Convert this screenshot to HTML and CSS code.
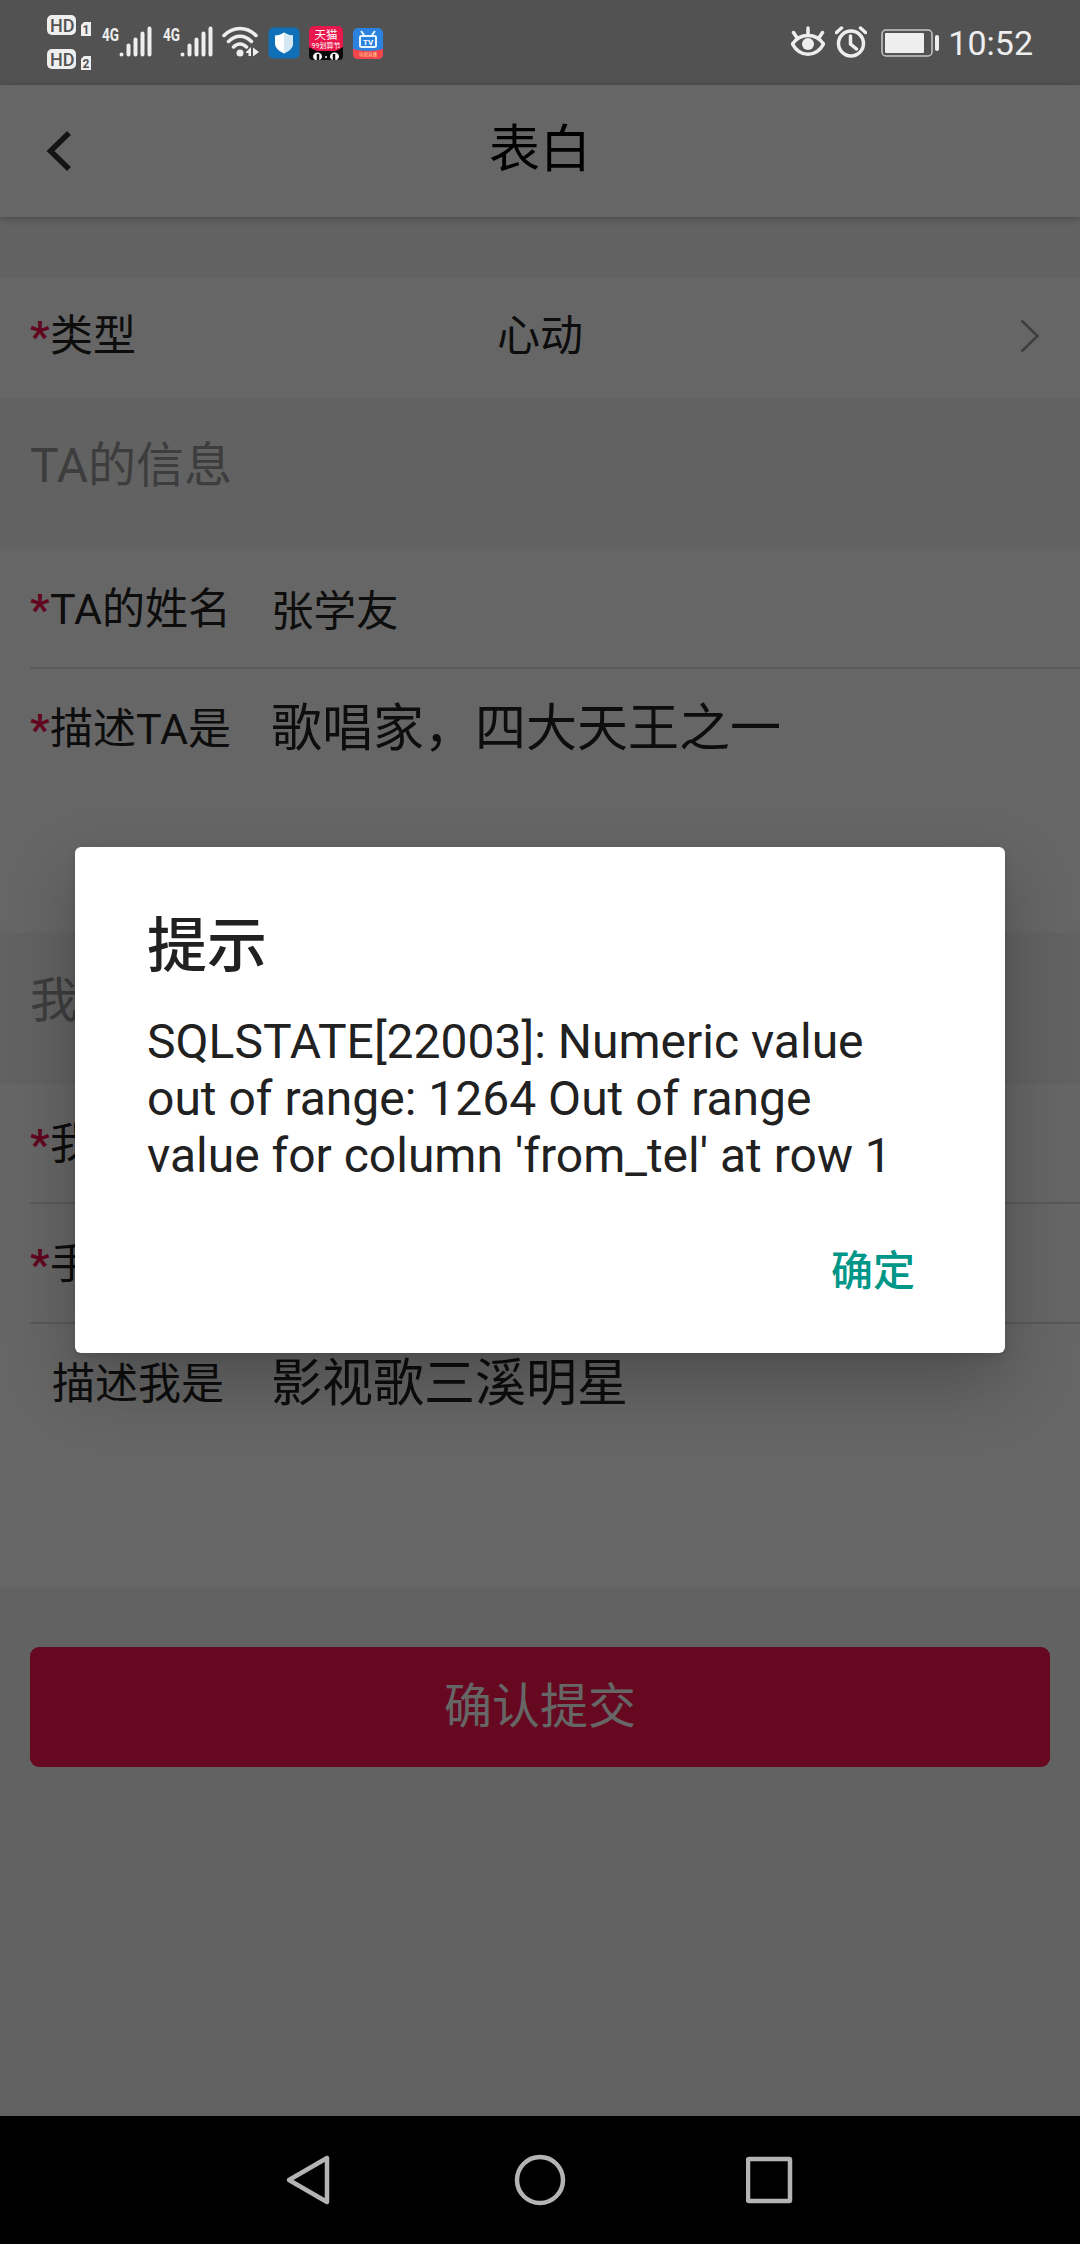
FILE: index.html
```html
<!DOCTYPE html>
<html lang="zh-CN">
<head>
    <meta charset="UTF-8">
    <meta name="viewport" content="width=device-width, initial-scale=1.0">
    <title>表白</title>
    <link rel="stylesheet" href="styles.css">
</head>
<body>
    <!-- Status bar -->
    <div class="status-bar">
        <svg class="icon-hd" width="46" height="58" viewBox="0 0 46 58">
            <rect x="0" y="1" width="29" height="20" rx="5"/>
            <rect x="0" y="35" width="29" height="20" rx="5"/>
            <path d="M37 8h7v14h-10v-11z"/>
            <path d="M37 42h7v14h-10v-11z"/>
            <text x="3" y="17.500">HD</text>
            <text x="3" y="51.500">HD</text>
            <text class="small" x="35.500" y="20">1</text>
            <text class="small" x="35.500" y="54">2</text>
        </svg>
        <svg class="icon-signal" width="50" height="32" viewBox="0 0 50 32">
            <text x="0" y="15" textLength="17" lengthAdjust="spacingAndGlyphs">4G</text>
            <path d="M19.500 28.500v0M26.500 28.500v-9M33.500 28.500v-15M40.500 28.500v-21M47.500 28.500v-26"/>
        </svg>
        <svg class="icon-signal second" width="50" height="32" viewBox="0 0 50 32">
            <text x="0" y="15" textLength="17" lengthAdjust="spacingAndGlyphs">4G</text>
            <path d="M19.500 28.500v0M26.500 28.500v-9M33.500 28.500v-15M40.500 28.500v-21M47.500 28.500v-26"/>
        </svg>
        <svg class="icon-wifi" width="38" height="32" viewBox="0 0 38 32">
            <path class="arc" d="M2 9.500C11 0 25 0 34 9.500M6.500 15.500c7-7 16-7 23 0M11.500 21c4-4 9-4 13 0"/>
            <circle cx="18" cy="27" r="3.500"/>
            <path d="M24 26l5-5v9h-2.500v-3h-2.500zM31 21.500v9l6-4.500z"/>
        </svg>
        <svg class="icon-shield" width="32" height="32" viewBox="0 0 32 32">
            <rect width="31" height="31" x=".5" y=".5" rx="5" fill="#0f70b7"/>
            <path d="M16 5.500c3 2 6 3 9 3v7.500c0 5-4 8-9 10.500C11 24 7 21 7 16V8.500c3 0 6-1 9-3z" fill="#fff"/>
            <path d="M16 5.500c3 2 6 3 9 3v7.500c0 5-4 8-9 10.500z" fill="#d3e8f3"/>
        </svg>
        <svg class="icon-tmall" width="34" height="34" viewBox="0 0 34 34">
            <rect width="34" height="34" rx="5" fill="#e8174c"/>
            <path d="M0 21c3 2 6 3 8 4h18c3-1 5-2 8-4v9q0 4-4 4H4q-4 0-4-4z" fill="#0a0a0a"/>
            <ellipse cx="8.500" cy="30.500" rx="4.500" ry="4" fill="#fff"/>
            <ellipse cx="25.500" cy="30.500" rx="4.500" ry="4" fill="#fff"/>
            <path d="M9 28v6M25 28v6" stroke="#0a0a0a" stroke-width="2.500"/>
            <circle cx="17" cy="31" r="1" fill="#fff"/>
            <text x="17" y="12.500" font-size="11.500">天猫</text>
            <text x="17" y="21.500" font-size="7">99划算节</text>
        </svg>
        <svg class="icon-tv" width="30" height="31" viewBox="0 0 30 31">
            <rect width="30" height="31" rx="5" fill="#2c83df"/>
            <path d="M0 21q15 4 30 0v5q0 5-5 5H5q-5 0-5-5z" fill="#f4454d"/>
            <rect x="7" y="8" width="16" height="11" rx="1.500" fill="none" stroke="#e9f5ff" stroke-width="2"/>
            <path d="M11 7L8 3M19 7l3-4" stroke="#e9f5ff" stroke-width="2"/>
            <text class="tv-text" x="15" y="16.500" font-size="8">TV</text>
            <text class="tv-label" x="15" y="28" font-size="4.500">电视直播</text>
        </svg>
        <div class="status-right">
            <svg class="icon-eye" width="34" height="32" viewBox="0 0 34 32">
                <path d="M1.500 18C9 6.500 25 6.500 32.500 18 25 31.500 9 31.500 1.500 18zM17 8V2M5.500 11L2.500 6.500M28.500 11l3-4.500"/>
                <circle cx="17" cy="18" r="6"/>
            </svg>
            <svg class="icon-alarm" width="32" height="32" viewBox="0 0 32 32">
                <circle cx="16" cy="17.500" r="12.500"/>
                <path d="M15.500 10v8l6 5M1.500 6.500L6.500 2M30.500 6.500L25.500 2"/>
            </svg>
            <svg class="icon-battery" width="60" height="28" viewBox="0 0 60 28">
                <rect x="1" y="1" width="50" height="26" rx="4" fill="none" stroke="#c8c8c8" stroke-width="1.500"/>
                <rect x="4" y="4" width="39" height="20" rx="1"/>
                <rect x="54" y="6" width="4" height="16" rx="2"/>
            </svg>
            <span class="time">10:52</span>
        </div>
    </div>

    <!-- Page behind the dialog -->
    <div class="page">
        <div class="title-bar">
            <svg class="back" width="26" height="42" viewBox="0 0 26 42">
                <path d="M23 3L4.500 21 23 39"/>
            </svg>
            <h1>表白</h1>
        </div>

        <div class="form-group first">
            <div class="form-field">
                <label><i>*</i>类型</label>
                <span class="picker">心动</span>
                <svg class="arrow" width="20" height="34" viewBox="0 0 20 34">
                    <path d="M1.500 1.500L17.500 17 1.500 32.500"/>
                </svg>
            </div>
        </div>

        <div class="group-title">TA的信息</div>
        <div class="form-group">
            <div class="form-field">
                <label><i>*</i>TA的姓名</label>
                <span class="value">张学友</span>
            </div>
            <div class="form-field textarea">
                <label><i>*</i>描述TA是</label>
                <span class="value large">歌唱家，四大天王之一</span>
            </div>
        </div>

        <div class="group-title">我的信息</div>
        <div class="form-group">
            <div class="form-field">
                <label><i>*</i>我的姓名</label>
            </div>
            <div class="form-field">
                <label><i>*</i>手机号码</label>
            </div>
            <div class="form-field textarea">
                <label class="optional">描述我是</label>
                <span class="value large">影视歌三溪明星</span>
            </div>
        </div>

        <button class="submit">确认提交</button>

        <!-- Alert dialog -->
        <div class="dialog-container">
            <div class="dialog-box">
                <h2>提示</h2>
                <p>SQLSTATE[22003]: Numeric value out of range: 1264 Out of range value for column 'from_tel' at row 1</p>
                <button class="confirm">确定</button>
            </div>
        </div>
    </div>

    <!-- System navigation -->
    <div class="nav-bar">
        <svg width="50" height="54" viewBox="0 0 50 54">
            <path d="M43 5v44L5 27z"/>
        </svg>
        <svg width="54" height="54" viewBox="0 0 54 54">
            <circle cx="27" cy="27" r="23"/>
        </svg>
        <svg width="50" height="54" viewBox="0 0 50 54">
            <rect x="2" y="6" width="42" height="42" rx="1"/>
        </svg>
    </div>
</body>
</html>
```

FILE: styles.css
```css
* {
    box-sizing: border-box;
}

body {
    margin: 0;
    width: 1080px;
    height: 2244px;
    overflow: hidden;
    font-family: Roboto, "Noto Sans CJK SC", sans-serif;
    background-color: #000;
}

svg {
    display: block;
    flex: none;
}

/* Status bar */
.status-bar {
    display: flex;
    align-items: flex-start;
    height: 85px;
    padding: 14px 47px 0;
    background-color: #525252;
    color: #eee;
    fill: #eee;
}

.icon-hd text {
    font-size: 18px;
    font-weight: 500;
    fill: #525252;
}

.icon-hd .small {
    font-size: 12px;
    font-weight: 700;
}

.icon-signal {
    margin: 12px 0 0 9px;
    overflow: visible;
}

.icon-signal.second {
    margin-left: 11px;
}

.icon-signal text {
    font-size: 19px;
    font-weight: 700;
}

.icon-signal path {
    stroke: #eee;
    stroke-width: 4;
    stroke-linecap: round;
}

.icon-wifi {
    margin: 12px 0 0 9px;
}

.icon-wifi .arc {
    fill: none;
    stroke: #eee;
    stroke-width: 3.500;
    stroke-linecap: round;
}

.icon-shield {
    margin: 13px 0 0 8px;
}

.icon-tmall {
    margin: 12px 0 0 9px;
}

.icon-tmall text,
.icon-tv text {
    text-anchor: middle;
    fill: #fff;
}

.icon-tv {
    margin: 14px 0 0 10px;
}

.icon-tv .tv-text {
    font-weight: 700;
}

.icon-tv .tv-label {
    fill: #ffd591;
}

.status-right {
    display: flex;
    align-items: flex-start;
    margin-left: auto;
    padding-top: 12px;
}

.icon-eye path,
.icon-alarm {
    fill: none;
    stroke: #eee;
    stroke-width: 3.500;
    stroke-linecap: round;
}

.icon-alarm {
    margin-left: 10px;
}

.icon-battery {
    margin: 3px 0 0 14px;
}

.time {
    margin-left: 7px;
    font-size: 34px;
    line-height: 34px;
}

/* Page */
.page {
    position: relative;
    height: 2031px;
    background-color: #f5f5f5;
    color: #222;
}

.title-bar {
    position: relative;
    display: flex;
    align-items: center;
    height: 132px;
    padding: 0 46px;
    background-color: #fff;
    box-shadow: 0 2px 8px rgba(0, 0, 0, 0.25);
}

.title-bar h1 {
    flex: 1;
    margin: 0 26px 2px 0;
    font-size: 51px;
    font-weight: 400;
    line-height: 60px;
    text-align: center;
    color: #000;
}

.back path {
    fill: none;
    stroke: #333;
    stroke-width: 5.500;
}

.group-title {
    height: 151px;
    padding: 38px 30px 0;
    font-size: 48px;
    line-height: 60px;
    color: #999;
}

.form-group {
    background-color: #fff;
}

.form-group.first {
    margin-top: 61px;
}

.first .form-field {
    height: 120px;
    padding-bottom: 4px;
}

/* Form rows */
.form-field {
    display: flex;
    align-items: center;
    height: 119px;
    margin-left: 30px;
    font-size: 43px;
    line-height: 60px;
}

.form-field + .form-field {
    border-top: 2px solid #dedede;
    margin-top: -1px;
    height: 121px;
}

.form-field.textarea {
    align-items: flex-start;
    height: 266px;
    padding-top: 30px;
}

.form-field label {
    width: 241px;
    white-space: nowrap;
}

.form-field label i {
    display: inline-block;
    width: 20px;
    font-style: normal;
    font-weight: 700;
    color: #f50f50;
}

.form-field .optional {
    padding-left: 22px;
}

.value {
    padding-top: 6px;
    font-size: 42.5px;
}

.value.large {
    padding-top: 0;
    font-size: 51px;
}

.picker {
    flex: 1;
    padding-right: 20px;
    padding-left: 226px;
}

.arrow {
    margin-right: 40px;
}

.arrow path {
    fill: none;
    stroke: #999;
    stroke-width: 2.500;
}

.submit {
    display: block;
    width: 1020px;
    height: 120px;
    margin: 59px 30px 0;
    padding: 0 0 11px;
    border: 0;
    border-radius: 9px;
    background-color: #fc1450;
    font-family: inherit;
    font-size: 48px;
    color: #fff;
}

/* Dialog */
.dialog-container {
    position: absolute;
    top: 0;
    left: 0;
    display: flex;
    align-items: center;
    justify-content: center;
    width: 100%;
    height: 100%;
    padding-bottom: 1px;
    overflow: hidden;
    background-color: rgba(0, 0, 0, 0.6);
}

.dialog-box {
    width: 930px;
    height: 506px;
    padding: 64px 72px 0;
    background-color: #fff;
    border-radius: 6px;
    box-shadow: 0 30px 70px rgba(0, 0, 0, 0.24), 0 3px 8px rgba(0, 0, 0, 0.1);
    color: #212121;
}

.dialog-box h2 {
    margin: 0;
    font-size: 60px;
    font-weight: 500;
    line-height: 72px;
}

.dialog-box p {
    margin: 30px 0 0;
    font-size: 48px;
    line-height: 57px;
}

.confirm {
    display: block;
    margin: 58px 18px 0 auto;
    padding: 0;
    border: 0;
    background: none;
    font-family: inherit;
    font-size: 42px;
    font-weight: 500;
    line-height: 60px;
    color: #009688;
}

/* System navigation */
.nav-bar {
    display: flex;
    justify-content: center;
    gap: 179px;
    height: 128px;
    padding-top: 37px;
    background-color: #000;
}

.nav-bar svg {
    fill: none;
    stroke: #b4b4b4;
    stroke-width: 4.500;
    stroke-linejoin: round;
}
```
